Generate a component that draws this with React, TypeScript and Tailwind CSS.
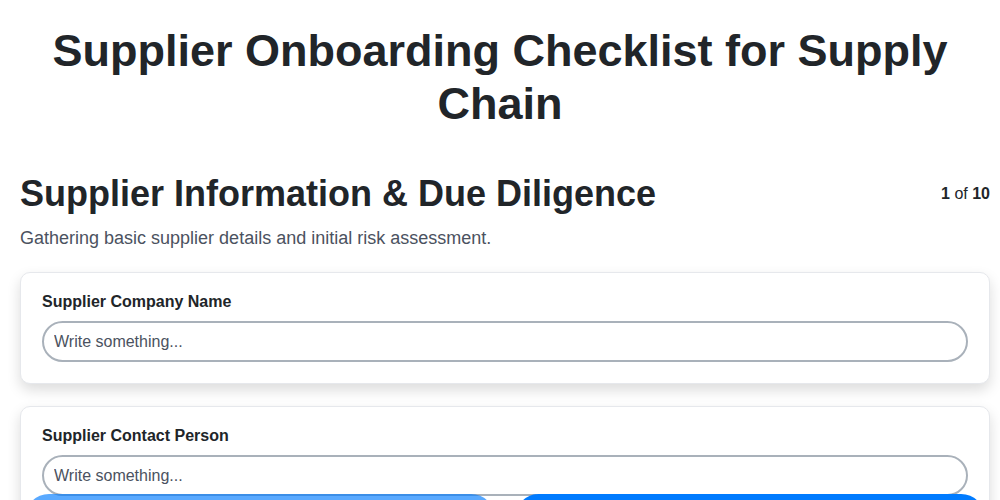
import React from 'react';

const fields = ['Supplier Company Name', 'Supplier Contact Person', 'Supplier Email Address'];

const FieldCard = ({ label }: { label: string }) => {
  return (
    <div className="bg-white border border-[#e6e8ec] rounded-[10px] shadow-[0_6px_14px_rgba(0,0,0,0.14)] px-[21px] pt-5 pb-[21px] mb-[22px]">
      <label className="block mb-[10px] text-base font-bold leading-[18px] text-[#212529]">{label}</label>
      <input
        type="text"
        placeholder="Write something..."
        className="block w-full h-[41px] px-[10px] border-2 border-[#a9b1ba] rounded-full text-base text-[#212529] placeholder:text-[#4b5260] outline-none"
      />
    </div>
  );
};

export default function App() {
  return (
    <div className="min-h-[500px] bg-white font-['Liberation_Sans',Arial,sans-serif] text-[#212529]">
      {/* Title */}
      <h1 className="pt-6 px-10 text-center text-[45px] font-bold leading-[53px]">
        Supplier Onboarding Checklist for Supply Chain
      </h1>

      <div className="pl-5 pr-[10px] pt-[42px]">
        {/* Step header */}
        <div className="flex items-center justify-between">
          <h2 className="text-[36px] font-bold leading-[44px]">Supplier Information &amp; Due Diligence</h2>
          <div className="text-base">
            <span className="font-bold">1</span> of <span className="font-bold">10</span>
          </div>
        </div>
        <p className="mt-3 mb-[23px] text-[18px] leading-[21px] text-[#4b5260]">
          Gathering basic supplier details and initial risk assessment.
        </p>

        {/* Fields */}
        {fields.map((f) => (
          <FieldCard key={f} label={f} />
        ))}
      </div>

      {/* Navigation */}
      <div className="fixed left-[25px] w-[960px] top-[494px] flex gap-5">
        <button className="flex-1 h-12 rounded-[24px] bg-[#007bff] opacity-65 text-white font-bold">Previous</button>
        <button className="flex-1 h-12 rounded-[24px] bg-[#007bff] text-white font-bold">Next</button>
      </div>
    </div>
  );
}
